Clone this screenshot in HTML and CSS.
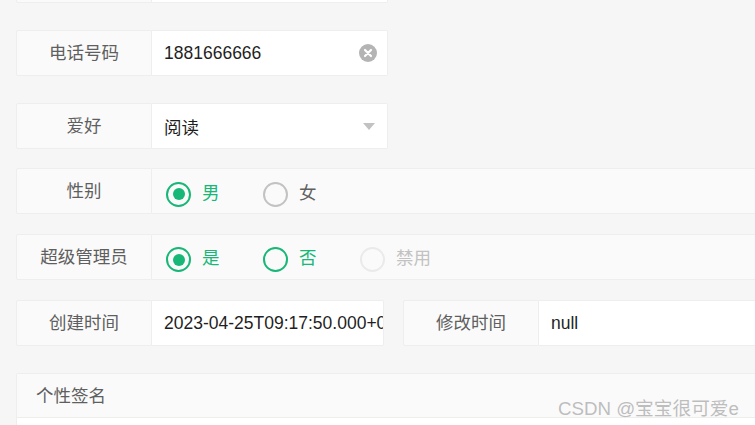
FILE: index.html
```html
<!DOCTYPE html>
<html lang="zh-CN">
<head>
<meta charset="utf-8">
<title>form</title>
<link rel="stylesheet" href="styles.css">
</head>
<body>
<div class="form">
  <div class="item first">
    <div class="label"></div>
    <div class="input"></div>
  </div>

  <div class="item gap27">
    <div class="label">电话号码</div>
    <div class="input">
      <span class="value">1881666666</span>
      <span class="clear"><svg width="18" height="18" viewBox="0 0 18 18"><circle cx="9" cy="9" r="9" fill="#b4b4b4"/><path d="M6 6 L12 12 M12 6 L6 12" stroke="#fff" stroke-width="2.2" stroke-linecap="round"/></svg></span>
    </div>
  </div>

  <div class="item gap27">
    <div class="label">爱好</div>
    <div class="input">
      <span class="value">阅读</span>
      <span class="arrow"></span>
    </div>
  </div>

  <div class="item pane gap19">
    <div class="label">性别</div>
    <div class="radios r6">
      <span class="radio on"><i class="ico"></i><span class="txt">男</span></span>
      <span class="radio"><i class="ico"></i><span class="txt">女</span></span>
    </div>
  </div>

  <div class="item pane gap20">
    <div class="label">超级管理员</div>
    <div class="radios r5">
      <span class="radio on"><i class="ico"></i><span class="txt">是</span></span>
      <span class="radio green"><i class="ico"></i><span class="txt">否</span></span>
      <span class="radio disabled"><i class="ico"></i><span class="txt">禁用</span></span>
    </div>
  </div>

  <div class="inline-row gap20">
    <div class="item">
      <div class="label">创建时间</div>
      <div class="input date"><span class="value">2023-04-25T09:17:50.000+08:00</span></div>
    </div>
    <div class="item wide">
      <div class="label">修改时间</div>
      <div class="input grow"><span class="value">null</span></div>
    </div>
  </div>

  <div class="textarea-item gap27">
    <div class="ta-label">个性签名</div>
    <div class="ta-body"></div>
  </div>
</div>
<div class="watermark">CSDN @宝宝很可爱e</div>
</body>
</html>
```

FILE: styles.css
```css
html, body {
  margin: 0;
  padding: 0;
  background: #f6f6f6;
  overflow: hidden;
  height: 425px;
}
body {
  font-family: "Liberation Sans", "Noto Sans CJK SC", sans-serif;
  font-size: 17.5px;
  position: relative;
}
.form {
  width: 1000px;
  padding-left: 16px;
}
.item {
  display: flex;
  height: 46px;
  box-sizing: border-box;
}
.first { margin-top: -43px; }
.gap27 { margin-top: 27px; }
.gap19 { margin-top: 19px; }
.gap20 { margin-top: 20px; }

.label {
  width: 136px;
  flex: none;
  box-sizing: border-box;
  border: 1px solid #eee;
  border-radius: 2px 0 0 2px;
  background: #fafafa;
  color: #5f5f5f;
  display: flex;
  align-items: center;
  justify-content: center;
  padding-bottom: 3px;
}
.input {
  width: 236px;
  box-sizing: border-box;
  border: 1px solid #eee;
  border-left: 0;
  border-radius: 0 2px 2px 0;
  background: #fff;
  display: flex;
  align-items: center;
  padding-left: 12px;
  color: #1f1f1f;
  position: relative;
  overflow: hidden;
  white-space: nowrap;
}
.value { flex: none; }
.clear {
  position: absolute;
  right: 10px;
  top: 13px;
  width: 18px;
  height: 18px;
  display: block;
}
.clear svg { display: block; }
.arrow {
  position: absolute;
  right: 12px;
  top: 19px;
  width: 0;
  height: 0;
  border-style: solid;
  border-width: 7px 6.5px 0 6.5px;
  border-color: #c2c2c2 transparent transparent transparent;
}

.pane .label { border-right: 1px solid #eee; }
.radios {
  flex: 1;
  box-sizing: border-box;
  border: 1px solid #eee;
  border-left: 0;
  background: #fafafa;
  display: flex;
  align-items: center;
  padding-left: 14px;
}
.r6 { padding-top: 6px; }
.r5 { padding-top: 5px; }
.radio {
  display: flex;
  align-items: center;
  width: 97px;
  flex: none;
  color: #5f5f5f;
}
.ico {
  width: 25px;
  height: 25px;
  box-sizing: border-box;
  border: 2px solid #c2c2c2;
  border-radius: 50%;
  display: flex;
  align-items: center;
  justify-content: center;
  margin-right: 11px;
}
.txt { line-height: 20px; padding-bottom: 3px; }
.radio.on .ico, .radio.green .ico { border-color: #16b777; }
.radio.on .ico::after {
  content: "";
  width: 12px;
  height: 12px;
  border-radius: 50%;
  background: #16b777;
}
.radio.on .txt, .radio.green .txt { color: #16b777; }
.radio.disabled .ico { border-color: #eaeaea; }
.radio.disabled .txt { color: #c2c2c2; }

.inline-row {
  display: flex;
  gap: 19px;
}
.input.date {
  width: 232px;
  padding-right: 1px;
}
.item.wide { flex: 1; }
.input.grow { flex: 1; width: auto; }

.textarea-item {
  box-sizing: border-box;
  border: 1px solid #eee;
  border-radius: 2px;
}
.ta-label {
  height: 44px;
  box-sizing: border-box;
  background: #fafafa;
  border-bottom: 1px solid #eee;
  color: #5f5f5f;
  display: flex;
  align-items: center;
  padding-left: 19px;
  padding-bottom: 3px;
}
.ta-body {
  height: 60px;
  background: #fff;
}

.watermark {
  position: absolute;
  left: 558px;
  top: 393px;
  font-size: 18.7px;
  color: #bdbdbd;
  text-shadow: 0 0 1px #fff;
  white-space: nowrap;
}
```
